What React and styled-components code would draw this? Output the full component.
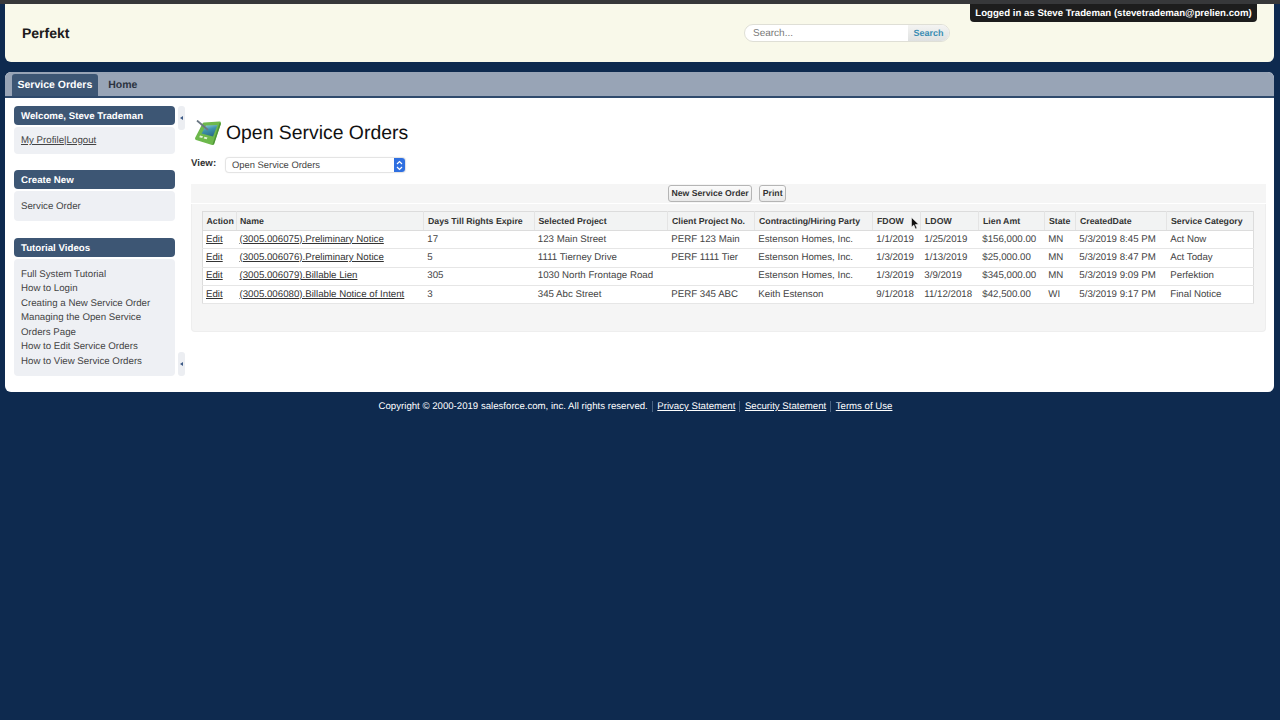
import React from 'react';
import styled, { createGlobalStyle } from 'styled-components';

const GlobalStyle = createGlobalStyle`
    html, body {
        margin: 0;
        height: 100%;
        background: #0e2a4f;
    }
    body {
        font-family: "Liberation Sans", Arial, sans-serif;
        font-size: 9.7px;
        color: #333;
        text-rendering: geometricPrecision;
    }
    #root {
        min-height: 100%;
    }
`;

const Page = styled.div`
    position: relative;
    height: 720px;
    overflow: hidden;
    background: #0e2a4f;
`;

const TopStrip = styled.div`
    height: 4px;
    background: #37383a;
`;

const Frame = styled.div`
    padding: 0 6px 0 5px;
`;

const Header = styled.header`
    display: grid;
    grid-template-columns: 739px 206px;
    align-items: center;
    height: 58px;
    background: #f9f9ea;
    border-radius: 0 0 6px 6px;
`;

const Brand = styled.div`
    padding: 0 0 0 17px;
    font-size: 14px;
    font-weight: bold;
    color: #1c1c1c;
`;

const SearchBox = styled.div`
    display: flex;
    height: 18px;
    margin-top: -1px;
    border-radius: 9px;
    border: 1px solid #dfdfd6;
    overflow: hidden;
    background: #fff;
    box-sizing: border-box;
`;

const SearchInput = styled.div`
    flex: 1;
    padding-left: 8px;
    line-height: 17px;
    font-size: 10px;
    color: #777;
`;

const SearchButton = styled.div`
    width: 41px;
    text-align: center;
    line-height: 16px;
    font-size: 9px;
    font-weight: bold;
    color: #3b8db3;
    background: linear-gradient(#f4f4f2, #dfe1e1);
`;

const LoggedIn = styled.div`
    position: absolute;
    top: 4px;
    left: 970px;
    width: 287px;
    height: 18px;
    line-height: 19px;
    text-align: center;
    white-space: nowrap;
    font-size: 9.65px;
    font-weight: bold;
    color: #fff;
    background: #1d1d1d;
    border-radius: 0 0 4px 4px;
`;

const Panel = styled.section`
    margin-top: 10px;
    height: 320px;
    background: #fff;
    border-radius: 6px;
    overflow: hidden;
`;

const TabBar = styled.nav`
    display: flex;
    align-items: flex-end;
    height: 24px;
    padding-left: 7px;
    background: #98a4b6;
    border-bottom: 2px solid #2f4a6c;
`;

const Tab = styled.div`
    padding: 0 ${(p) => (p.$active ? '5.500px' : '10.500px')};
    height: 22px;
    line-height: 22px;
    font-size: 10.5px;
    font-weight: bold;
    color: ${(p) => (p.$active ? '#fff' : '#2b3340')};
    background: ${(p) => (p.$active ? '#3d5674' : 'transparent')};
    border-radius: 3px 3px 0 0;
`;

const Body = styled.div`
    display: flex;
    padding: 8px 8px 0 9px;
`;

const Sidebar = styled.aside`
    width: 161px;
    flex: none;
`;

const Handles = styled.div`
    display: flex;
    flex-direction: column;
    justify-content: space-between;
    width: 7px;
    height: 270px;
    margin-left: 3px;
    flex: none;
`;

const Handle = styled.div`
    display: flex;
    align-items: center;
    justify-content: center;
    height: 24px;
    background: #eceef2;
    border-radius: 3px;

    &::before {
        content: '';
        border: 2.5px solid transparent;
        border-left: 0;
        border-right: 3px solid #3d5a86;
    }
`;

const BoxTitle = styled.div`
    height: 19px;
    padding-left: 7px;
    line-height: 21px;
    font-weight: bold;
    color: #fff;
    background: #3d5674;
    border-radius: 4px;
`;

const BoxBody = styled.div`
    margin: 2px 0 ${(p) => p.$gap || 0}px;
    padding: ${(p) => p.$pad}px 7px 0;
    min-height: ${(p) => p.$min}px;
    box-sizing: border-box;
    background: #eef0f4;
    border-radius: 4px;
    color: #444;
    line-height: 14.6px;
`;

const PlainLink = styled.a`
    color: #444;
    text-decoration: ${(p) => (p.$line ? 'underline' : 'none')};
`;

const TutorialLink = styled.div`
    width: 135px;
`;

const Main = styled.main`
    flex: 1;
    margin-left: 6px;
`;

const TitleRow = styled.div`
    display: flex;
    align-items: center;
    height: 28px;
    margin-top: 13px;
    padding-left: 3px;
`;

const PageTitle = styled.h1`
    margin: 0 0 0 4px;
    font-size: 19.4px;
    font-weight: normal;
    color: #111;
`;

const ViewRow = styled.div`
    display: flex;
    align-items: center;
    height: 14px;
    margin-top: 11px;
`;

const ViewLabel = styled.label`
    width: 35px;
    margin-top: -3px;
    font-size: 9.700px;
    font-weight: bold;
    color: #333;
`;

const SelectBox = styled.div`
    display: flex;
    justify-content: space-between;
    width: 179px;
    height: 14px;
    box-sizing: border-box;
    padding-left: 6px;
    line-height: 14px;
    font-size: 9.4px;
    color: #444;
    background: #fff;
    border-radius: 3px;
    box-shadow: 0 0 1px 1px #e2e2e2;
`;

const SelectArrows = styled.div`
    display: flex;
    align-items: center;
    justify-content: center;
    width: 11px;
    background: #2f6fe0;
    border-radius: 0 3px 3px 0;
`;

const Toolbar = styled.div`
    display: flex;
    justify-content: center;
    gap: 7px;
    height: 19px;
    margin-top: 12px;
    padding: 1px 3px 0 0;
    box-sizing: border-box;
    background: #f5f5f5;
`;

const ToolButton = styled.div`
    height: 17px;
    padding: 0 2.500px;
    box-sizing: border-box;
    line-height: 15px;
    font-size: 8.7px;
    font-weight: bold;
    color: #333;
    background: linear-gradient(#fbfbfb, #e8e8e8);
    border: 1px solid #b5b5b5;
    border-radius: 3px;
`;

const TableWrap = styled.div`
    height: 128px;
    margin-top: 1px;
    padding: 7px 11px 0 10px;
    box-sizing: border-box;
    background: #f5f5f5;
    border: 1px solid #eeeeee;
    border-top: 0;
    border-radius: 0 0 4px 4px;
`;

const Table = styled.table`
    width: 1052px;
    table-layout: fixed;
    border-collapse: collapse;
    background: #fff;
    border: 1px solid #dcdcdc;
`;

const Th = styled.th`
    height: 18px;
    padding: 0 0 0 4px;
    text-align: left;
    font-size: 8.75px;
    font-weight: bold;
    color: #333;
    background: #f2f3f3;
    border-left: 1px solid #e4e4e4;
    border-bottom: 1px solid #dcdcdc;
    white-space: nowrap;
    overflow: hidden;

    &:first-child {
        padding-left: 3.500px;
        border-left: 0;
    }

    &:nth-child(2) {
        padding-left: 3px;
    }
`;

const Td = styled.td`
    height: 16.300px;
    padding: 0 0 1px 3px;
    color: #444;
    border-bottom: 1px solid #e6e6e6;
    white-space: nowrap;
    overflow: hidden;

    &:nth-child(n + 3) {
        padding-left: 3.800px;
    }
`;

const CellLink = styled.a`
    color: #333;
    text-decoration: underline;
`;

const Footer = styled.footer`
    display: flex;
    justify-content: center;
    align-items: center;
    padding: 9px 0 0 0;
    margin-left: -8px;
    font-size: 9.65px;
    color: #fff;
`;

const FooterLink = styled.a`
    margin-left: 4px;
    padding-left: 4.500px;
    color: #fff;
    text-decoration: underline;
    border-left: 1px solid #4a6484;
`;

const Cursor = styled.svg`
    position: absolute;
    left: 911px;
    top: 217px;
`;

const columns = [
    ['Action', 34],
    ['Name', 187],
    ['Days Till Rights Expire', 110.5],
    ['Selected Project', 133.5],
    ['Client Project No.', 87],
    ['Contracting/Hiring Party', 118],
    ['FDOW', 48],
    ['LDOW', 58],
    ['Lien Amt', 66],
    ['State', 31],
    ['CreatedDate', 91],
    ['Service Category', 87],
];

const rows = [
    ['(3005.006075).Preliminary Notice', '17', '123 Main Street', 'PERF 123 Main', 'Estenson Homes, Inc.', '1/1/2019', '1/25/2019', '$156,000.00', 'MN', '5/3/2019 8:45 PM', 'Act Now'],
    ['(3005.006076).Preliminary Notice', '5', '1111 Tierney Drive', 'PERF 1111 Tier', 'Estenson Homes, Inc.', '1/3/2019', '1/13/2019', '$25,000.00', 'MN', '5/3/2019 8:47 PM', 'Act Today'],
    ['(3005.006079).Billable Lien', '305', '1030 North Frontage Road', '', 'Estenson Homes, Inc.', '1/3/2019', '3/9/2019', '$345,000.00', 'MN', '5/3/2019 9:09 PM', 'Perfektion'],
    ['(3005.006080).Billable Notice of Intent', '3', '345 Abc Street', 'PERF 345 ABC', 'Keith Estenson', '9/1/2018', '11/12/2018', '$42,500.00', 'WI', '5/3/2019 9:17 PM', 'Final Notice'],
];

const tutorials = [
    'Full System Tutorial',
    'How to Login',
    'Creating a New Service Order',
    'Managing the Open Service Orders Page',
    'How to Edit Service Orders',
    'How to View Service Orders',
];

const TabletIcon = () => (
    <svg width="28" height="26" viewBox="0 0 28 26">
        <defs>
            <linearGradient id="screen" x1="0" y1="0" x2="0.4" y2="1">
                <stop offset="0" stopColor="#9fd4dc" />
                <stop offset="0.5" stopColor="#3f93ad" />
                <stop offset="1" stopColor="#2c6f8c" />
            </linearGradient>
        </defs>
        <path d="M10 4 L25.500 3 L18.500 23.500 L2.500 18.500Z" fill="#6db84c" stroke="#6db84c" strokeWidth="3" strokeLinejoin="round" />
        <path d="M27 3.500 L20 24.500 L18.500 24.500 L25.500 3Z" fill="#4c9436" />
        <path d="M12 5.500 L23.500 5 L19 16.500 L7.500 13.500Z" fill="url(#screen)" />
        <path d="M6 15.500 L9 16.300 L8.200 18 L5.200 17.200Z M10.500 16.800 L13.500 17.600 L12.700 19.300 L9.700 18.500Z" fill="#e3f2d6" />
        <path d="M3 0.500 L14 10" stroke="#6b7784" strokeWidth="1.800" />
    </svg>
);

const App = () => {
    return (
        <Page>
            <GlobalStyle />
            <TopStrip />
            <Frame>
                <Header>
                    <Brand>Perfekt</Brand>
                    <SearchBox>
                        <SearchInput>Search...</SearchInput>
                        <SearchButton>Search</SearchButton>
                    </SearchBox>
                </Header>
                <Panel>
                    <TabBar>
                        <Tab $active>Service Orders</Tab>
                        <Tab>Home</Tab>
                    </TabBar>
                    <Body>
                        <Sidebar>
                            <BoxTitle>Welcome, Steve Trademan</BoxTitle>
                            <BoxBody $gap={16} $pad={7} $min={27}>
                                <PlainLink $line>My Profile</PlainLink>|<PlainLink $line>Logout</PlainLink>
                            </BoxBody>
                            <BoxTitle>Create New</BoxTitle>
                            <BoxBody $gap={17} $pad={9} $min={30}>
                                <PlainLink>Service Order</PlainLink>
                            </BoxBody>
                            <BoxTitle>Tutorial Videos</BoxTitle>
                            <BoxBody $pad={8.5} $min={117}>
                                {tutorials.map((t) => (
                                    <TutorialLink key={t}>{t}</TutorialLink>
                                ))}
                            </BoxBody>
                        </Sidebar>
                        <Handles>
                            <Handle />
                            <Handle />
                        </Handles>
                        <Main>
                            <TitleRow>
                                <TabletIcon />
                                <PageTitle>Open Service Orders</PageTitle>
                            </TitleRow>
                            <ViewRow>
                                <ViewLabel>View:</ViewLabel>
                                <SelectBox>
                                    Open Service Orders
                                    <SelectArrows>
                                        <svg width="7" height="11" viewBox="0 0 7 11">
                                            <path d="M1 4 L3.500 1.500 L6 4 M1 7 L3.500 9.500 L6 7" fill="none" stroke="#fff" strokeWidth="1.200" />
                                        </svg>
                                    </SelectArrows>
                                </SelectBox>
                            </ViewRow>
                            <Toolbar>
                                <ToolButton>New Service Order</ToolButton>
                                <ToolButton>Print</ToolButton>
                            </Toolbar>
                            <TableWrap>
                                <Table>
                                    <colgroup>
                                        {columns.map(([label, width]) => (
                                            <col key={label} width={width} />
                                        ))}
                                    </colgroup>
                                    <thead>
                                        <tr>
                                            {columns.map(([label]) => (
                                                <Th key={label}>{label}</Th>
                                            ))}
                                        </tr>
                                    </thead>
                                    <tbody>
                                        {rows.map((row) => (
                                            <tr key={row[0]}>
                                                <Td><CellLink>Edit</CellLink></Td>
                                                <Td><CellLink>{row[0]}</CellLink></Td>
                                                {row.slice(1).map((cell, i) => (
                                                    <Td key={i}>{cell}</Td>
                                                ))}
                                            </tr>
                                        ))}
                                    </tbody>
                                </Table>
                            </TableWrap>
                        </Main>
                    </Body>
                </Panel>
                <Footer>
                    Copyright © 2000-2019 salesforce.com, inc. All rights reserved.
                    <FooterLink>Privacy Statement</FooterLink>
                    <FooterLink>Security Statement</FooterLink>
                    <FooterLink>Terms of Use</FooterLink>
                </Footer>
            </Frame>
            <LoggedIn>Logged in as Steve Trademan (stevetrademan@prelien.com)</LoggedIn>
            <Cursor width="8" height="13" viewBox="0 0 8 13">
                <path d="M0.500 0.500 L0.500 10 L2.800 8 L4.500 12 L6 11.300 L4.300 7.500 L7.500 7.300Z" fill="#111" stroke="#fff" strokeWidth="0.500" />
            </Cursor>
        </Page>
    );
};

export default App;
